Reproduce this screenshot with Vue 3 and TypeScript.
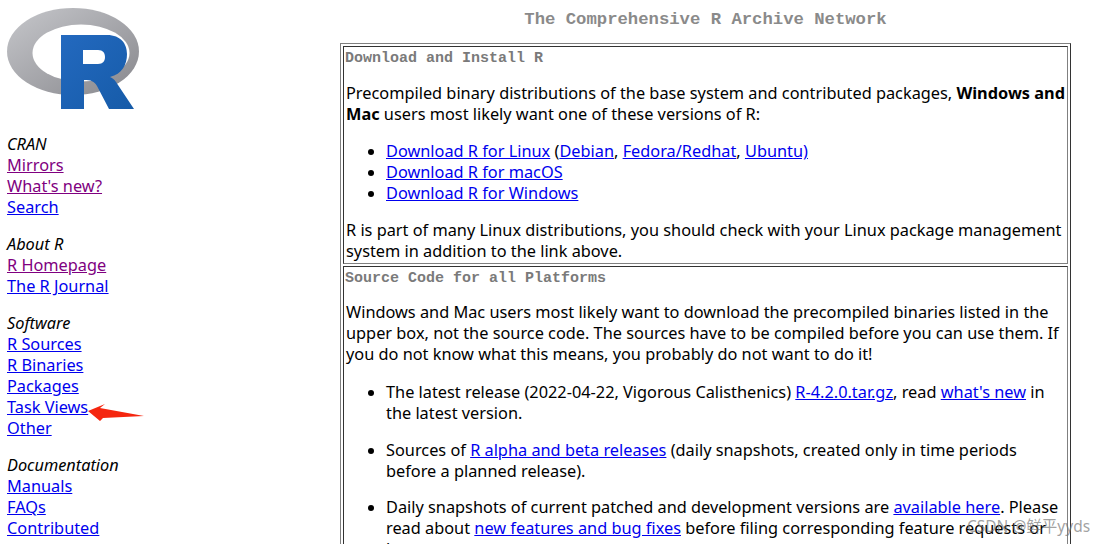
<script setup lang="ts">
interface NavLink { label: string; visited?: boolean }
interface NavSection { title: string; links: NavLink[] }

const sections: NavSection[] = [
  { title: 'CRAN', links: [{ label: 'Mirrors', visited: true }, { label: "What's new?", visited: true }, { label: 'Search' }] },
  { title: 'About R', links: [{ label: 'R Homepage', visited: true }, { label: 'The R Journal' }] },
  { title: 'Software', links: [{ label: 'R Sources' }, { label: 'R Binaries' }, { label: 'Packages' }, { label: 'Task Views' }, { label: 'Other' }] },
  { title: 'Documentation', links: [{ label: 'Manuals' }, { label: 'FAQs' }, { label: 'Contributed' }] }
]
</script>

<template>
  <div class="page">
    <aside class="side">
      <svg class="logo" viewBox="0 0 133 102" width="133" height="102" aria-label="R logo">
        <defs>
          <linearGradient id="ring" x1="0" y1="0" x2="1" y2="1">
            <stop offset="0" stop-color="#c6c7cb" />
            <stop offset="1" stop-color="#87878c" />
          </linearGradient>
          <linearGradient id="blue" x1="0" y1="0" x2="1" y2="1">
            <stop offset="0" stop-color="#2369bf" />
            <stop offset="1" stop-color="#165ba8" />
          </linearGradient>
        </defs>
        <ellipse cx="66" cy="43.500" rx="66" ry="43.500" fill="url(#ring)" />
        <ellipse cx="74" cy="45" rx="48.500" ry="28.500" fill="#fff" />
        <path fill="url(#blue)" fill-rule="evenodd" d="M54 27L100 27C114 27 120 36 120 46C120 57 115 66 103 69C105 70 107 71 109 74L127 101L102 101L90 78C87 73 84 72 77 72L77 101L54 101ZM76 42L76 56L91 56C96 56 98 53 98 49C98 45 96 42 91 42Z" />
      </svg>
      <nav class="nav">
        <section v-for="s in sections" :key="s.title" class="nav-group">
          <em class="nav-title">{{ s.title }}</em>
          <a v-for="l in s.links" :key="l.label" href="#" class="nav-link" :class="{ visited: l.visited }">{{ l.label }}</a>
        </section>
      </nav>
    </aside>

    <main class="main">
      <h1 class="title">The Comprehensive R Archive Network</h1>
      <div class="frame">
        <section class="cell">
          <h2 class="cell-title">Download and Install R</h2>
          <p>Precompiled binary distributions of the base system and contributed packages, <b>Windows and Mac</b> users most likely want one of these versions of R:</p>
          <ul>
            <li><a href="#">Download R for Linux</a> (<a href="#">Debian</a>, <a href="#">Fedora/Redhat</a>, <a href="#">Ubuntu)</a></li>
            <li><a href="#">Download R for macOS</a></li>
            <li><a href="#">Download R for Windows</a></li>
          </ul>
          <p>R is part of many Linux distributions, you should check with your Linux package management system in addition to the link above.</p>
        </section>
        <section class="cell source">
          <h2 class="cell-title">Source Code for all Platforms</h2>
          <p>Windows and Mac users most likely want to download the precompiled binaries listed in the upper box, not the source code. The sources have to be compiled before you can use them. If you do not know what this means, you probably do not want to do it!</p>
          <ul>
            <li>The latest release (2022-04-22, Vigorous Calisthenics) <a href="#">R-4.2.0.tar.gz</a>, read <a href="#">what's new</a> in the latest version.</li>
            <li>Sources of <a href="#">R alpha and beta releases</a> (daily snapshots, created only in time periods before a planned release).</li>
            <li>Daily snapshots of current patched and development versions are <a href="#">available here</a>. Please read about <a href="#">new features and bug fixes</a> before filing corresponding feature requests or bug reports.</li>
          </ul>
        </section>
      </div>
    </main>

    <svg class="arrow" viewBox="0 0 57 18" width="57" height="18">
      <path fill="#f5260f" d="M0 7L17 0L12 4L56 12L15 14L12 17Z" />
    </svg>
    <span class="mark">CSDN @鲜平yyds</span>
  </div>
</template>

<style>
html, body { margin: 0; overflow: hidden; background: #fff; }
</style>

<style scoped>
.page {
  position: relative;
  display: flex;
  width: 1104px;
  height: 544px;
  overflow: hidden;
  background: #fff;
  color: #000;
  font-family: "Noto Sans", "Noto Sans CJK SC", sans-serif;
  font-size: 16.320px;
  line-height: 21px;
}
a { color: #0000ee; text-decoration: underline; }
.side { width: 340px; flex: none; padding: 8px 0 0 7px; box-sizing: border-box; }
.logo { display: block; }
.nav { display: flex; flex-direction: column; gap: 16px; margin-top: 24px; }
.nav-group { display: flex; flex-direction: column; align-items: flex-start; }
.nav-title { font-style: italic; }
.visited { color: #800080; }
.main { width: 731px; flex: none; }
.title {
  margin: 9px 0 13px;
  height: 21px;
  font: bold 17.250px/21px "Liberation Mono", monospace;
  color: #8a8a8a;
  text-align: center;
}
.frame {
  display: flex;
  flex-direction: column;
  gap: 2px;
  padding: 2px;
  border: 1px solid;
  border-color: #808080 #333 #333 #808080;
}
.cell {
  padding: 1px 2px 1px 2px;
  border: 1px solid;
  border-color: #333 #808080 #808080 #333;
}
.cell-title {
  margin: 0 0 0 -1px;
  font: bold 15px/21px "Liberation Mono", monospace;
  color: #7a7a7a;
}
p { margin: 14px 0 16px; }
p:last-child { margin-bottom: 0; }
ul { margin: 16px 0; padding-left: 40px; }
.source li + li { margin-top: 16px; }
.source li:last-child { margin-top: 15px; }
.source p { margin-top: 13px; margin-bottom: 17px; }
.arrow { position: absolute; left: 88px; top: 404px; }
.mark { position: absolute; left: 967px; top: 516px; color: rgba(120, 120, 120, 0.7); font-size: 15.500px; }
</style>
